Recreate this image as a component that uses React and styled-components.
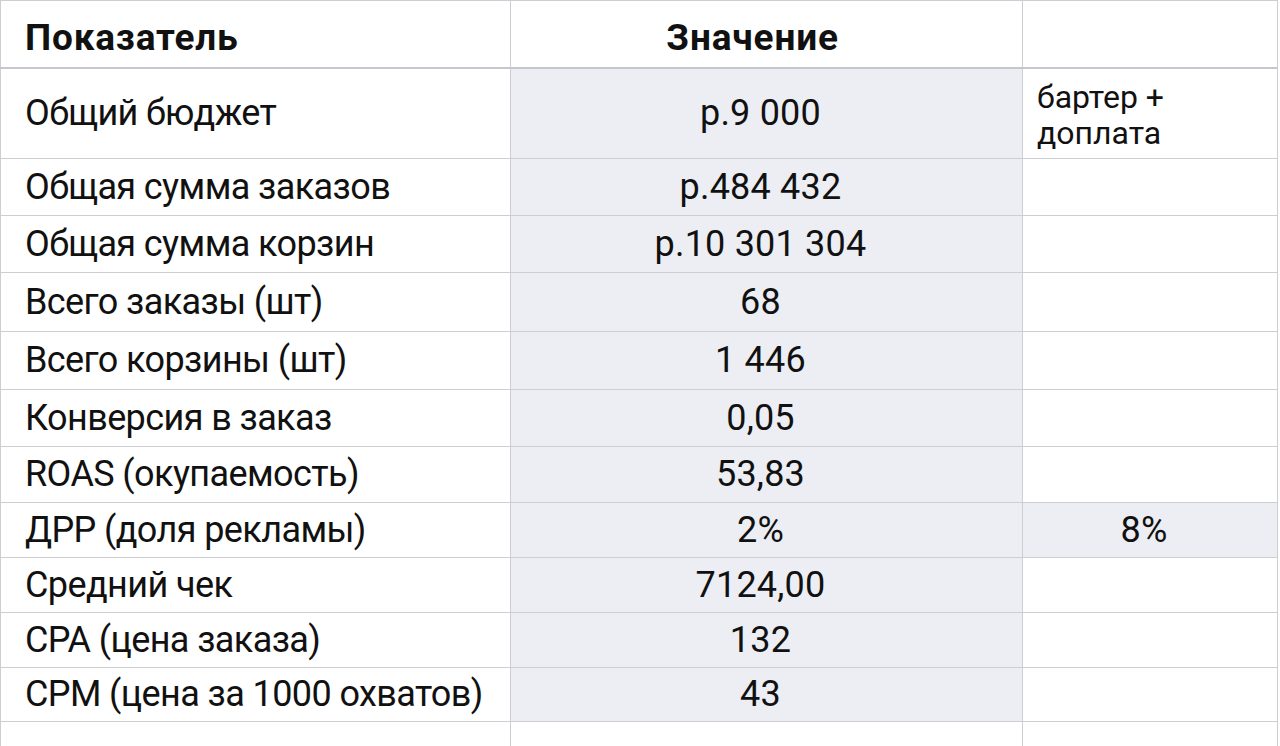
import React from "react";
import styled, { createGlobalStyle } from "styled-components";

const GlobalStyle = createGlobalStyle`
  html, body {
    margin: 0;
    padding: 0;
    background: #ffffff;
    overflow: hidden;
  }
  body {
    font-family: Roboto, "Noto Sans", "Liberation Sans", sans-serif;
    color: #111111;
  }
`;

const rows = [
  { label: "Общий бюджет", value: "р.9 000", note: "бартер +\nдоплата", h: 91 },
  { label: "Общая сумма заказов", value: "р.484 432", h: 57 },
  { label: "Общая сумма корзин", value: "р.10 301 304", h: 57 },
  { label: "Всего заказы (шт)", value: "68", h: 59 },
  { label: "Всего корзины (шт)", value: "1 446", h: 58 },
  { label: "Конверсия в заказ", value: "0,05", h: 57 },
  { label: "ROAS (окупаемость)", value: "53,83", h: 56 },
  { label: "ДРР (доля рекламы)", value: "2%", extra: "8%", h: 55 },
  { label: "Средний чек", value: "7124,00", h: 55 },
  { label: "CPA (цена заказа)", value: "132", h: 55 },
  { label: "CPM (цена за 1000 охватов)", value: "43", h: 54 },
];

export default function App() {
  return (
    <>
      <GlobalStyle />
      <Table>
        <colgroup>
          <col style={{ width: 510 }} />
          <col style={{ width: 512 }} />
          <col style={{ width: 255 }} />
        </colgroup>
        <thead>
          <Row $h={67}>
            <HeadCell>Показатель</HeadCell>
            <HeadCell $center>Значение</HeadCell>
            <HeadCell />
          </Row>
        </thead>
        <tbody>
          {rows.map((row) => (
            <Row key={row.label} $h={row.h}>
              <Cell>{row.label}</Cell>
              <Cell $center $shade>
                {row.value}
              </Cell>
              {row.note ? (
                <NoteCell>{row.note}</NoteCell>
              ) : (
                <Cell $center $shade={!!row.extra}>
                  {row.extra}
                </Cell>
              )}
            </Row>
          ))}
          <Row $h={40}>
            <Cell />
            <Cell />
            <Cell />
          </Row>
        </tbody>
      </Table>
    </>
  );
}

const Table = styled.table`
  width: 1277px;
  table-layout: fixed;
  border-collapse: collapse;
`;

const Row = styled.tr`
  height: ${(p) => p.$h}px;
`;

const Cell = styled.td`
  box-sizing: border-box;
  padding-top: 0;
  padding-bottom: 1px;
  border: 1px solid #cdced3;
  font-size: 36px;
  line-height: 40px;
  font-weight: 400;
  letter-spacing: ${(p) => (p.$center ? "0.2px" : "-0.6px")};
  white-space: nowrap;
  vertical-align: middle;
  text-align: ${(p) => (p.$center ? "center" : "left")};
  padding-left: ${(p) => (p.$center ? "0" : "24px")};
  padding-right: ${(p) => (p.$center ? "12px" : "0")};
  background: ${(p) => (p.$shade ? "#eceef4" : "#ffffff")};
`;

const HeadCell = styled.th`
  box-sizing: border-box;
  padding-top: 8px;
  padding-bottom: 0;
  border: 1px solid #cdced3;
  border-bottom: 2px solid #c6c7cc;
  font-size: 37px;
  font-weight: 700;
  letter-spacing: 0.8px;
  text-align: ${(p) => (p.$center ? "center" : "left")};
  padding-left: ${(p) => (p.$center ? "0" : "24px")};
  padding-right: ${(p) => (p.$center ? "28px" : "0")};
  vertical-align: middle;
  background: #ffffff;
`;

const NoteCell = styled.td`
  box-sizing: border-box;
  padding: 4px 0 0 14px;
  border: 1px solid #cdced3;
  font-size: 32px;
  line-height: 36px;
  white-space: pre-line;
  vertical-align: middle;
  background: #ffffff;
`;
